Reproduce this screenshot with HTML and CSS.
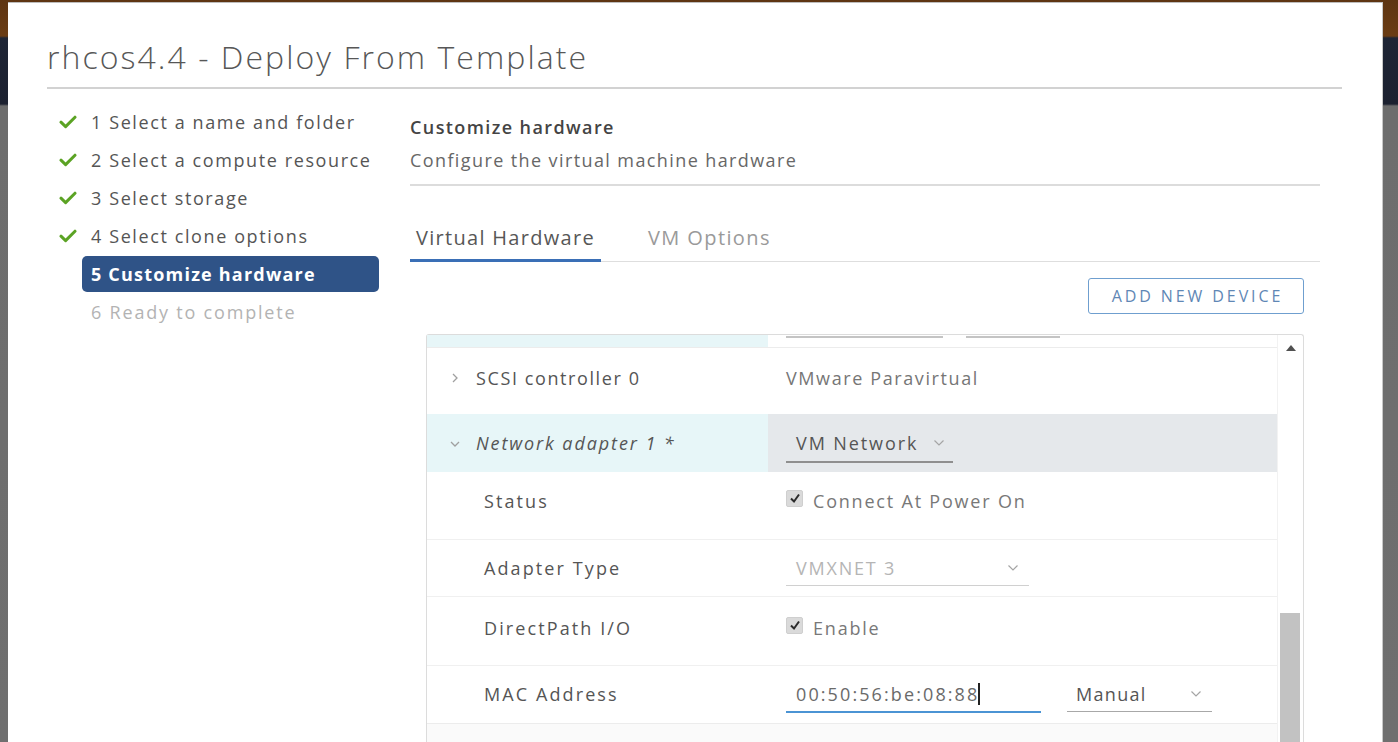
FILE: index.html
```html
<!DOCTYPE html>
<html>
<head>
<meta charset="utf-8">
<link rel="stylesheet" href="styles.css">
</head>
<body>
<div class="page">
  <div class="modal">
    <div class="modal-header">
      <h1 class="title">rhcos4.4 - Deploy From Template</h1>
    </div>
    <div class="modal-body">
      <nav class="steps">
        <div class="step done"><svg class="check" viewBox="0 0 18 14" width="18" height="14"><path d="M2 7.2 L6.6 11.6 L16 2.2" fill="none" stroke="#5ba324" stroke-width="3" stroke-linecap="round" stroke-linejoin="round"/></svg><span>1 Select a name and folder</span></div>
        <div class="step done"><svg class="check" viewBox="0 0 18 14" width="18" height="14"><path d="M2 7.2 L6.6 11.6 L16 2.2" fill="none" stroke="#5ba324" stroke-width="3" stroke-linecap="round" stroke-linejoin="round"/></svg><span>2 Select a compute resource</span></div>
        <div class="step done"><svg class="check" viewBox="0 0 18 14" width="18" height="14"><path d="M2 7.2 L6.6 11.6 L16 2.2" fill="none" stroke="#5ba324" stroke-width="3" stroke-linecap="round" stroke-linejoin="round"/></svg><span>3 Select storage</span></div>
        <div class="step done"><svg class="check" viewBox="0 0 18 14" width="18" height="14"><path d="M2 7.2 L6.6 11.6 L16 2.2" fill="none" stroke="#5ba324" stroke-width="3" stroke-linecap="round" stroke-linejoin="round"/></svg><span>4 Select clone options</span></div>
        <div class="step active"><span>5 Customize hardware</span></div>
        <div class="step pending"><span>6 Ready to complete</span></div>
      </nav>
      <section class="content">
        <div class="content-head">
          <div class="content-title">Customize hardware</div>
          <div class="content-sub">Configure the virtual machine hardware</div>
        </div>
        <div class="tabs">
          <div class="tab tab-active">Virtual Hardware</div>
          <div class="tab">VM Options</div>
        </div>
        <div class="toolbar">
          <button class="btn-outline">ADD NEW DEVICE</button>
        </div>
        <div class="grid-box">
          <div class="grid-rows">
            <div class="row row-partial">
              <div class="cell-label cyan"></div>
              <div class="cell-value">
                <span class="stub stub-a"></span><span class="stub stub-b"></span>
              </div>
            </div>
            <div class="row row-device row-scsi">
              <div class="cell-label">
                <svg class="caret" viewBox="0 0 8 12" width="8" height="12"><path d="M2 2 L6 6 L2 10" fill="none" stroke="#a0a0a0" stroke-width="1.3"/></svg>
                <span>SCSI controller 0</span>
              </div>
              <div class="cell-value"><span class="muted">VMware Paravirtual</span></div>
            </div>
            <div class="row row-device row-expanded">
              <div class="cell-label cyan">
                <svg class="caret" viewBox="0 0 12 8" width="12" height="8"><path d="M2 2 L6 6 L10 2" fill="none" stroke="#a0a0a0" stroke-width="1.3"/></svg>
                <span class="italic">Network adapter 1 *</span>
              </div>
              <div class="cell-value grayish">
                <div class="select select-net"><span>VM Network</span><svg class="chev" viewBox="0 0 12 8" width="12" height="8"><path d="M1.5 1.5 L6 6 L10.5 1.5" fill="none" stroke="#a5a5a5" stroke-width="1.2"/></svg></div>
              </div>
            </div>
            <div class="row sub r-status">
              <div class="cell-label sublabel">Status</div>
              <div class="cell-value">
                <label class="cb"><span class="box"><svg viewBox="0 0 14 14" width="14" height="14"><path d="M3 7.5 L6 10.5 L11 3.5" fill="none" stroke="#2b2b2b" stroke-width="2"/></svg></span><span class="cb-text">Connect At Power On</span></label>
              </div>
            </div>
            <div class="row sub r-type">
              <div class="cell-label sublabel">Adapter Type</div>
              <div class="cell-value">
                <div class="select select-type disabled"><span>VMXNET 3</span><svg class="chev" viewBox="0 0 12 8" width="12" height="8"><path d="M1.5 1.5 L6 6 L10.5 1.5" fill="none" stroke="#a5a5a5" stroke-width="1.2"/></svg></div>
              </div>
            </div>
            <div class="row sub r-dp">
              <div class="cell-label sublabel">DirectPath I/O</div>
              <div class="cell-value">
                <label class="cb"><span class="box"><svg viewBox="0 0 14 14" width="14" height="14"><path d="M3 7.5 L6 10.5 L11 3.5" fill="none" stroke="#2b2b2b" stroke-width="2"/></svg></span><span class="cb-text">Enable</span></label>
              </div>
            </div>
            <div class="row sub r-mac">
              <div class="cell-label sublabel">MAC Address</div>
              <div class="cell-value mac-cell">
                <div class="input-mac"><span>00:50:56:be:08:88</span><span class="cursor"></span></div>
                <div class="select select-manual"><span>Manual</span><svg class="chev" viewBox="0 0 12 8" width="12" height="8"><path d="M1.5 1.5 L6 6 L10.5 1.5" fill="none" stroke="#a5a5a5" stroke-width="1.2"/></svg></div>
              </div>
            </div>
            <div class="row row-next"></div>
          </div>
          <div class="scrollbar">
            <svg class="sb-up" viewBox="0 0 10 6" width="10" height="6"><path d="M0 6 L5 0 L10 6 Z" fill="#505050"/></svg>
            <div class="sb-track"><div class="sb-thumb"></div></div>
          </div>
        </div>
      </section>
    </div>
  </div>
</div>
</body>
</html>
```

FILE: styles.css
```css
* { box-sizing: border-box; }
html, body { margin: 0; padding: 0; }
body {
  font-family: "Open Sans", "Liberation Sans", sans-serif;
  color: #565656;
  letter-spacing: 1.6px;
}
.page {
  width: 1398px;
  height: 742px;
  overflow: hidden;
  background: linear-gradient(to bottom, #5e3512 0, #6a3c14 36px, #1e2535 38px, #1c2130 104px, #6d6d6d 106px, #6f6f6f 100%);
  padding: 2px 15px 0 8px;
  display: flex;
}
.modal {
  flex: 1;
  background: #fff;
  border-top: 1px solid #bdbdbd;
  border-right: 1px solid #c8c8c8;
  display: flex;
  flex-direction: column;
  padding: 0 40px 0 39px;
}
.modal-header {
  padding-top: 34px;
  border-bottom: 2px solid #d2d2d2;
  padding-bottom: 10px;
}
.title {
  margin: 0;
  font-weight: 300;
  font-size: 32px;
  line-height: 40px;
  color: #575757;
  letter-spacing: 2.05px;
  white-space: nowrap;
}
.modal-body {
  display: flex;
  flex: 1;
}
.steps {
  width: 363px;
  padding-top: 15px;
  display: flex;
  flex-direction: column;
  gap: 2px;
}
.step {
  height: 36px;
  display: flex;
  align-items: center;
  font-size: 18px;
  font-weight: 500;
  color: #555;
  white-space: nowrap;
}
.step .check { margin-left: 12px; margin-right: 14px; flex: none; }
.step.active {
  margin-left: 35px;
  width: 297px;
  padding-left: 9px;
  background: #2f5387;
  border-radius: 5px;
  color: #fff;
  font-weight: 700;
  letter-spacing: 1.2px;
}
.step.pending { padding-left: 44px; color: #b3b3b3; letter-spacing: 1.8px; }
.content {
  width: 910px;
  display: flex;
  flex-direction: column;
}
.content-head {
  padding-top: 26px;
  padding-bottom: 12px;
  border-bottom: 2px solid #dcdcdc;
}
.content-title {
  font-size: 18px;
  line-height: 24px;
  font-weight: 600;
  color: #444;
  letter-spacing: 1.4px;
}
.content-sub {
  margin-top: 9px;
  font-size: 18px;
  line-height: 24px;
  color: #676767;
  letter-spacing: 1.4px;
}
.tabs {
  margin-top: 38px;
  display: flex;
  gap: 41px;
  border-bottom: 1px solid #dedede;
}
.tab {
  font-size: 20px;
  line-height: 28px;
  padding: 0 6px 7px;
  color: #9a9a9a;
  border-bottom: 3px solid transparent;
  margin-bottom: -1px;
  letter-spacing: 1.4px;
  white-space: nowrap;
}
.tab-active {
  color: #575757;
  border-bottom-color: #3a6fb6;
  letter-spacing: 1.3px;
}
.toolbar {
  display: flex;
  justify-content: flex-end;
  padding: 16px 16px 0 0;
}
.btn-outline {
  height: 36px;
  width: 216px;
  border: 1.5px solid #6f9fcf;
  border-radius: 3px;
  background: #fff;
  color: #5f87b5;
  font-family: "Open Sans", sans-serif;
  font-size: 16px;
  font-weight: 500;
  letter-spacing: 2.9px;
  padding: 0;
  text-indent: 3px;
}
.grid-box {
  margin: 20px 16px 0 16px;
  border: 1px solid #dcdcdc;
  border-bottom: none;
  display: flex;
  flex: 1;
  border-radius: 3px 3px 0 0;
}
.grid-rows {
  flex: 1;
  display: flex;
  flex-direction: column;
}
.row {
  display: flex;
}
.cell-label {
  width: 341px;
  display: flex;
  align-items: center;
  font-size: 18px;
  white-space: nowrap;
}
.cell-value {
  flex: 1;
  display: flex;
  align-items: center;
  padding-left: 18px;
  font-size: 18px;
  white-space: nowrap;
}
.cyan { background: #e7f6f8; }
.grayish { background: #e5e8eb; }
.row-partial { height: 13px; border-bottom: 1px solid #ececec; }
.row-partial .cell-value { align-items: flex-start; }
.stub { display: block; height: 2px; background: #c4c4c4; margin-top: 1px; }
.stub-a { width: 157px; }
.stub-b { width: 94px; margin-left: 23px; }
.row-device .cell-label { padding-left: 24px; }
.row-scsi { height: 66px; }
.row-scsi .cell-label, .row-scsi .cell-value { align-items: flex-start; padding-top: 18px; line-height: 24px; }
.row-scsi .caret { margin-top: 6px; }
.caret { margin-right: 17px; flex: none; }
.row-expanded { height: 58px; }
.row-expanded .cell-label, .row-expanded .cell-value { align-items: flex-start; padding-top: 17px; line-height: 24px; }
.row-expanded .caret { margin-left: -2px; margin-right: 15px; margin-top: 9px; }
.row-device .cell-label span { color: #555; }
.italic { font-style: italic; letter-spacing: 1.9px; }
.muted { color: #767676; letter-spacing: 1.6px; }
.select {
  display: flex;
  align-items: center;
  justify-content: space-between;
  border-bottom: 1px solid #a8a8a8;
  padding: 0 12px 5px 10px;
  line-height: 24px;
}
.select-net { width: 167px; border-bottom: 2px solid #8f8f8f; padding-right: 8px; padding-bottom: 6px; color: #555; letter-spacing: 1.9px; }
.select-net .chev { margin-left: 6px; }
.select-type { width: 243px; color: #b5b5b5; border-bottom-color: #d0d0d0; padding-right: 10px; letter-spacing: 1.8px; }
.row.sub { align-items: flex-start; }
.row.sub .cell-label, .row.sub .cell-value { align-items: flex-start; }
.sublabel { padding-left: 57px; line-height: 24px; color: #555; letter-spacing: 2.1px; }
.r-status { height: 68px; padding-top: 17px; border-bottom: 1px solid #f0f0f0; }
.r-type { height: 57px; padding-top: 16px; border-bottom: 1px solid #f0f0f0; }
.r-dp { height: 69px; padding-top: 19px; border-bottom: 1px solid #f0f0f0; }
.r-mac { height: 58px; padding-top: 16px; border-bottom: 1px solid #ececec; }
.row-next { flex: 1; background: #fafafa; }
.cb { display: flex; align-items: center; line-height: 24px; }
.box {
  width: 17px; height: 17px;
  background: #dadada;
  border: 1px solid #cfcfcf;
  border-radius: 2px;
  display: flex; align-items: center; justify-content: center;
  margin-right: 10px;
  margin-top: -6px;
  flex: none;
}
.cb-text { color: #787878; letter-spacing: 1.8px; }
.mac-cell { gap: 26px; }
.input-mac {
  width: 255px;
  padding: 0 0 5px 10px;
  line-height: 24px;
  border-bottom: 2px solid #4b94d4;
  color: #6a6a6a;
  display: flex;
  align-items: center;
  letter-spacing: 2.1px;
}
.cursor { display: inline-block; width: 1.5px; height: 22px; background: #222; margin-left: -1px; }
.select-manual { width: 145px; color: #555; padding-left: 9px; padding-right: 10px; letter-spacing: 1.3px; }
.scrollbar {
  width: 26px;
  display: flex;
  flex-direction: column;
  align-items: center;
  border-left: 1px solid #f2f2f2;
}
.sb-up { margin-top: 10px; }
.sb-track { flex: 1; width: 100%; display: flex; flex-direction: column; padding: 0 3px 0 2px; }
.sb-thumb { margin-top: 262px; flex: 1; background: #c2c2c2; }
```
